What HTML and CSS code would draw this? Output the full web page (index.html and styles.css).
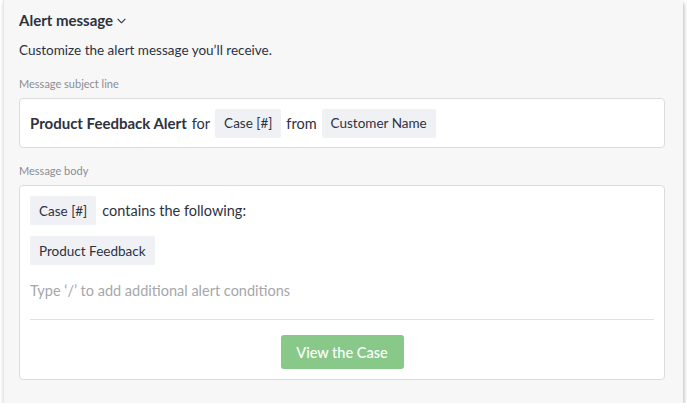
FILE: index.html
```html
<!DOCTYPE html>
<html lang="en">
<head>
    <meta charset="UTF-8">
    <title>Alert message</title>
    <link rel="stylesheet" href="styles.css">
</head>
<body>
    <div class="panel">
        <h2 class="panel-title">
            Alert message
            <svg class="chevron" viewBox="0 0 10 6">
                <path d="M1 1l4 4 4-4" fill="none" stroke="currentColor" stroke-width="1.2" stroke-linecap="round" stroke-linejoin="round"/>
            </svg>
        </h2>
        <p class="intro">Customize the alert message you’ll receive.</p>

        <div class="field-label">Message subject line</div>
        <div class="box subject">
            <strong>Product Feedback Alert</strong>
            <span class="word">for</span>
            <span class="chip">Case [#]</span>
            <span class="word">from</span>
            <span class="chip">Customer Name</span>
        </div>

        <div class="field-label">Message body</div>
        <div class="box body-box">
            <div class="line">
                <span class="chip">Case [#]</span>
                <span class="word">contains the following:</span>
            </div>
            <div class="line">
                <span class="chip">Product Feedback</span>
            </div>
            <div class="placeholder">Type ‘/’ to add additional alert conditions</div>
            <div class="actions">
                <button class="btn">View the Case</button>
            </div>
        </div>
    </div>
</body>
</html>
```

FILE: styles.css
```css
body {
    margin: 0;
    background: #fff;
    font-family: Lato, 'Noto Sans', sans-serif;
    color: #2d3240;
}

.panel {
    width: 680px;
    height: 403px;
    margin-left: 3px;
    padding: 0 18px 0 15px;
    background: #f7f7f7;
    border-left: 1px solid #e6e6e6;
    box-sizing: border-box;
    box-shadow: 1px 3px 4px rgba(0,0,0,0.28);
    overflow: hidden;
}

.panel-title {
    margin: 0;
    padding-top: 11px;
    font-size: 15px;
    font-weight: 700;
    display: flex;
    align-items: center;
    gap: 4px;
    height: 18px;
}

.chevron {
    width: 9px;
    height: 6px;
    margin-top: 2px;
}

.intro {
    margin: 12px 0 0;
    font-size: 13.5px;
    line-height: 18px;
}

.field-label {
    margin-top: 18px;
    font-size: 11px;
    color: #8a8d93;
    line-height: 14px;
}

.box {
    margin-top: 7px;
    background: #fff;
    border: 1px solid #dcdcdc;
    border-radius: 4px;
    font-size: 14.5px;
}

.subject {
    height: 50px;
    box-sizing: border-box;
    padding: 0 10px;
    display: flex;
    align-items: center;
    gap: 5px;
}

.subject + .field-label {
    margin-top: 16px;
}

.subject strong {
    font-weight: 700;
    font-size: 15px;
}

.chip {
    display: inline-flex;
    align-items: center;
    height: 29px;
    padding: 0 9px;
    background: #f0f1f5;
    border-radius: 2px;
    font-size: 13.5px;
}

.word {
    font-size: 14.5px;
}

.body-box {
    height: 195px;
    box-sizing: border-box;
    padding: 10px 10px 0;
}

.line {
    display: flex;
    align-items: center;
    gap: 6px;
    margin-bottom: 11px;
}

.placeholder {
    margin-top: 17px;
    color: #a5a7ab;
    font-size: 14.5px;
    line-height: 18px;
}

.actions {
    margin-top: 19px;
    border-top: 1px solid #e1e1e1;
    padding-top: 15px;
    display: flex;
    justify-content: center;
}

.btn {
    width: 123px;
    height: 34px;
    background: #88c98a;
    color: #fff;
    border: none;
    border-radius: 3px;
    font-family: inherit;
    font-size: 14.5px;
    font-weight: 500;
}
```
